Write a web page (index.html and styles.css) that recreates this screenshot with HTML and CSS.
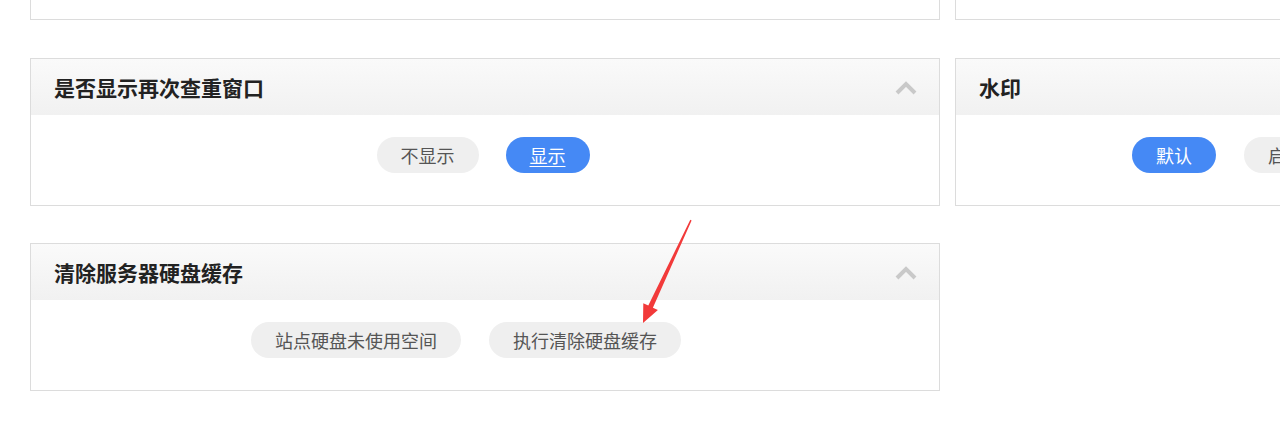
FILE: index.html
```html
<!DOCTYPE html>
<html lang="zh-CN">
<head>
<meta charset="utf-8">
<title>设置</title>
<link rel="stylesheet" href="styles.css">
</head>
<body>
<div class="page">
  <div class="grid">
    <section class="card card-prev"></section>
    <section class="card card-prev"></section>

    <section class="card">
      <header class="card-head">
        <h3 class="card-title">是否显示再次查重窗口</h3>
        <svg class="fold" width="22" height="14" viewBox="0 0 22 14"><path d="M2 12 L11 3 L20 12" fill="none" stroke="#c9c9c9" stroke-width="4"/></svg>
      </header>
      <div class="card-body body-toggle">
        <a class="btn">不显示</a>
        <a class="btn btn-on btn-hover">显示</a>
      </div>
    </section>

    <section class="card">
      <header class="card-head">
        <h3 class="card-title">水印</h3>
      </header>
      <div class="card-body body-start">
        <a class="btn btn-on">默认</a>
        <a class="btn">启用</a>
        <a class="btn">关闭</a>
      </div>
    </section>

    <section class="card">
      <header class="card-head">
        <h3 class="card-title">清除服务器硬盘缓存</h3>
        <svg class="fold" width="22" height="14" viewBox="0 0 22 14"><path d="M2 12 L11 3 L20 12" fill="none" stroke="#c9c9c9" stroke-width="4"/></svg>
      </header>
      <div class="card-body body-shift">
        <a class="btn">站点硬盘未使用空间</a>
        <a class="btn">执行清除硬盘缓存</a>
      </div>
    </section>
  </div>

  <svg class="pointer" width="1280" height="437" viewBox="0 0 1280 437">
    <polygon points="690.3,219.7 691.6,220.4 652.9,307.8 657.9,310.1 643,323 643.3,303.3 648.3,305.6" fill="#f23a3a"/>
  </svg>
</div>
</body>
</html>
```
FILE: styles.css
```css
* {
  box-sizing: border-box;
}

html, body {
  margin: 0;
  padding: 0;
  background: #fff;
  overflow: hidden;
}

body {
  font-family: "Noto Sans CJK SC", "Noto Sans", sans-serif;
  color: #333;
}

.page {
  position: relative;
  width: 1280px;
  height: 437px;
  overflow: hidden;
}

.grid {
  display: grid;
  grid-template-columns: 910px 910px;
  column-gap: 15px;
  row-gap: 37px;
  padding-left: 30px;
  margin-top: -128px;
}

.card {
  border: 1px solid #dcdcdc;
  height: 148px;
  background: #fff;
}

.card-prev {
  margin-bottom: 1px;
}

.card-head {
  height: 56px;
  display: flex;
  align-items: center;
  justify-content: space-between;
  padding: 0 22px 0 23px;
  background: linear-gradient(#fafafa, #f1f1f1);
}

.card-title {
  margin: 0;
  font-size: 21px;
  font-weight: 700;
  color: #222;
  line-height: 1;
}

.fold {
  display: block;
  margin-top: 2px;
}

.card-body {
  height: 90px;
  display: flex;
  justify-content: center;
  align-items: flex-start;
  gap: 27px;
  padding-top: 22px;
}

.body-toggle {
  padding-right: 4px;
}

.body-start {
  justify-content: flex-start;
  padding-left: 176px;
  gap: 28px;
}

.body-shift {
  padding-right: 38px;
  gap: 28px;
}

.btn {
  display: inline-flex;
  align-items: center;
  height: 36px;
  padding: 0 24px 1px;
  border-radius: 18px;
  background: #efefef;
  color: #555;
  font-size: 18px;
  line-height: 1;
  white-space: nowrap;
  cursor: pointer;
}

.btn-on {
  background: #4589f5;
  color: #fff;
}

.btn-hover {
  text-decoration: underline;
  text-underline-offset: 3px;
}

.pointer {
  position: absolute;
  left: 0;
  top: 0;
  pointer-events: none;
}
```
